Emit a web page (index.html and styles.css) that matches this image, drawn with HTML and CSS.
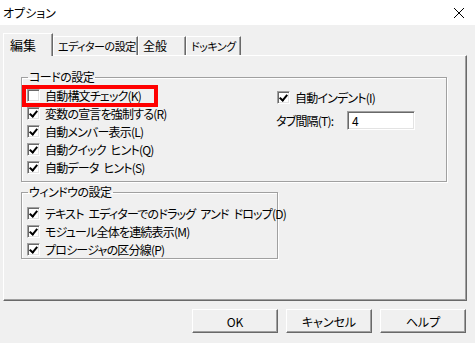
FILE: index.html
```html
<!DOCTYPE html>
<html lang="ja">
<head>
    <meta charset="UTF-8">
    <title>オプション</title>
    <link rel="stylesheet" href="styles.css">
</head>
<body>

<div class="titlebar">
    <span class="title">オプション</span>
    <svg class="close" width="12" height="12" viewBox="0 0 12 12">
        <path d="M1 1 L11 11 M11 1 L1 11" stroke="#000" stroke-width="1" fill="none"/>
    </svg>
</div>

<div class="dialog">
    <!-- tabs -->
    <div class="tabs">
        <div class="tab active">編集</div>
        <div class="tab">エディターの設定</div>
        <div class="tab">全般</div>
        <div class="tab">ドッキング</div>
    </div>

    <div class="panel">
        <fieldset class="group group-code">
            <legend>コードの設定</legend>
            <div class="group-body">
                <div class="col">
                    <div class="row marked"><span class="check"></span>自動構文チェック(K)</div>
                    <div class="row"><span class="check on"></span>変数の宣言を強制する(R)</div>
                    <div class="row"><span class="check on"></span>自動メンバー表示(L)</div>
                    <div class="row"><span class="check on"></span>自動クイック ヒント(Q)</div>
                    <div class="row"><span class="check on"></span>自動データ ヒント(S)</div>
                </div>
                <div class="col col-right">
                    <div class="row"><span class="check on"></span>自動インデント(I)</div>
                    <div class="row tab-width">
                        <span class="field-label">タブ間隔(T):</span>
                        <span class="textbox">4</span>
                    </div>
                </div>
            </div>
        </fieldset>

        <fieldset class="group group-window">
            <legend>ウィンドウの設定</legend>
            <div class="row"><span class="check on"></span>テキスト エディターでのドラッグ アンド ドロップ(D)</div>
            <div class="row"><span class="check on"></span>モジュール全体を連続表示(M)</div>
            <div class="row"><span class="check on"></span>プロシージャの区分線(P)</div>
        </fieldset>
    </div>

    <div class="buttons">
        <button>OK</button>
        <button>キャンセル</button>
        <button>ヘルプ</button>
    </div>
</div>

</body>
</html>
```

FILE: styles.css
```css
body {
    margin: 0;
    background-color: #f0f0f0;
    font-family: "Noto Sans CJK JP", "Noto Sans", sans-serif;
    font-size: 12px;
    color: #000;
}
.titlebar {
    height: 25px;
    background-color: #fff;
    display: flex;
    align-items: center;
    justify-content: space-between;
    padding: 0 10px 0 3px;
}
.title {
    font-size: 12px;
    font-feature-settings: "palt";
}
.dialog {
    padding: 8px 8px 0 3px;
}
.tabs {
    display: flex;
    align-items: flex-end;
    height: 22px;
}
.tab {
    flex: none;
    box-sizing: border-box;
    height: 19px;
    line-height: 18px;
    padding: 0 0 0 4px;
    white-space: nowrap;
    border-top: 1px solid #fff;
    border-left: 1px solid #fff;
    border-right: 1px solid #696969;
    box-shadow: inset -1px 0 0 #a0a0a0;
    font-size: 11px;
    font-feature-settings: "palt";
    letter-spacing: -0.5px;
}
.tab.active {
    height: 23px;
    line-height: 22px;
    padding-left: 6px;
    font-size: 13px;
    letter-spacing: 0;
    position: relative;
    z-index: 1;
    background-color: #f0f0f0;
    margin-bottom: -1px;
}
.tab:nth-child(1) { width: 50px; }
.tab:nth-child(2) { width: 85px; }
.tab:nth-child(3) { width: 48px; font-size: 12px; letter-spacing: 0; }
.tab:nth-child(4) { width: 55px; }
.panel {
    height: 244px;
    border-top: 1px solid #fff;
    border-left: 1px solid #fff;
    border-right: 1px solid #696969;
    border-bottom: 1px solid #696969;
    box-shadow: inset -1px -1px 0 #a0a0a0;
    padding: 0 0 0 17px;
}
.group {
    min-width: 0;
    margin: 14px 0 0 0;
    padding: 0 0 5px 5px;
    border: 1px solid #a0a0a0;
    box-shadow: inset 1px 1px 0 #fff, 1px 1px 0 #fff;
}
.group legend {
    margin-left: 1px;
    padding: 0 1px;
    height: 14px;
    line-height: 14px;
    font-feature-settings: "palt";
    letter-spacing: -0.5px;
}
.group-code {
    width: 419px;
}
.group-window {
    width: 250px;
    margin-top: 3px;
    padding-top: 5px;
    padding-bottom: 0;
}
.group-body {
    display: flex;
    padding-top: 2px;
}
.col {
    width: 250px;
}
.col-right {
    width: auto;
    padding-top: 2px;
}
.row {
    display: flex;
    align-items: center;
    height: 18px;
    gap: 5px;
    white-space: nowrap;
    font-feature-settings: "palt";
    letter-spacing: -0.8px;
    word-spacing: 3px;
}
.row.marked {
    position: relative;
}
.row.marked::after {
    content: "";
    position: absolute;
    left: -5px;
    top: -1px;
    width: 128px;
    height: 14px;
    border: 4px solid #f00;
}
.check {
    flex: none;
    width: 11px;
    height: 11px;
    background-color: #fff;
    border: 1px solid;
    border-color: #a0a0a0 #fff #fff #a0a0a0;
    box-shadow: inset 1px 1px 0 #696969, inset -1px -1px 0 #e3e3e3;
    position: relative;
}
.check.on::after {
    content: "";
    position: absolute;
    left: 3px;
    top: 1px;
    width: 3px;
    height: 6px;
    border-right: 2px solid #000;
    border-bottom: 2px solid #000;
    transform: rotate(40deg);
}
.tab-width {
    height: 20px;
    margin-top: 4px;
    gap: 0;
}
.field-label {
    width: 71px;
    margin-left: -1px;
}
.textbox {
    width: 62px;
    height: 17px;
    line-height: 17px;
    padding-left: 4px;
    background-color: #fff;
    border: 1px solid;
    border-color: #a0a0a0 #fff #fff #a0a0a0;
    box-shadow: inset 1px 1px 0 #696969, inset -1px -1px 0 #e3e3e3;
}
.buttons {
    display: flex;
    justify-content: flex-end;
    gap: 8px;
    margin-top: 8px;
    padding-right: 1px;
}
button {
    width: 86px;
    height: 24px;
    font-family: inherit;
    font-size: 12px;
    font-feature-settings: "palt";
    background-color: #f0f0f0;
    border: 1px solid;
    border-color: #fff #696969 #696969 #fff;
    box-shadow: inset -1px -1px 0 #a0a0a0;
    padding: 0;
}
```
